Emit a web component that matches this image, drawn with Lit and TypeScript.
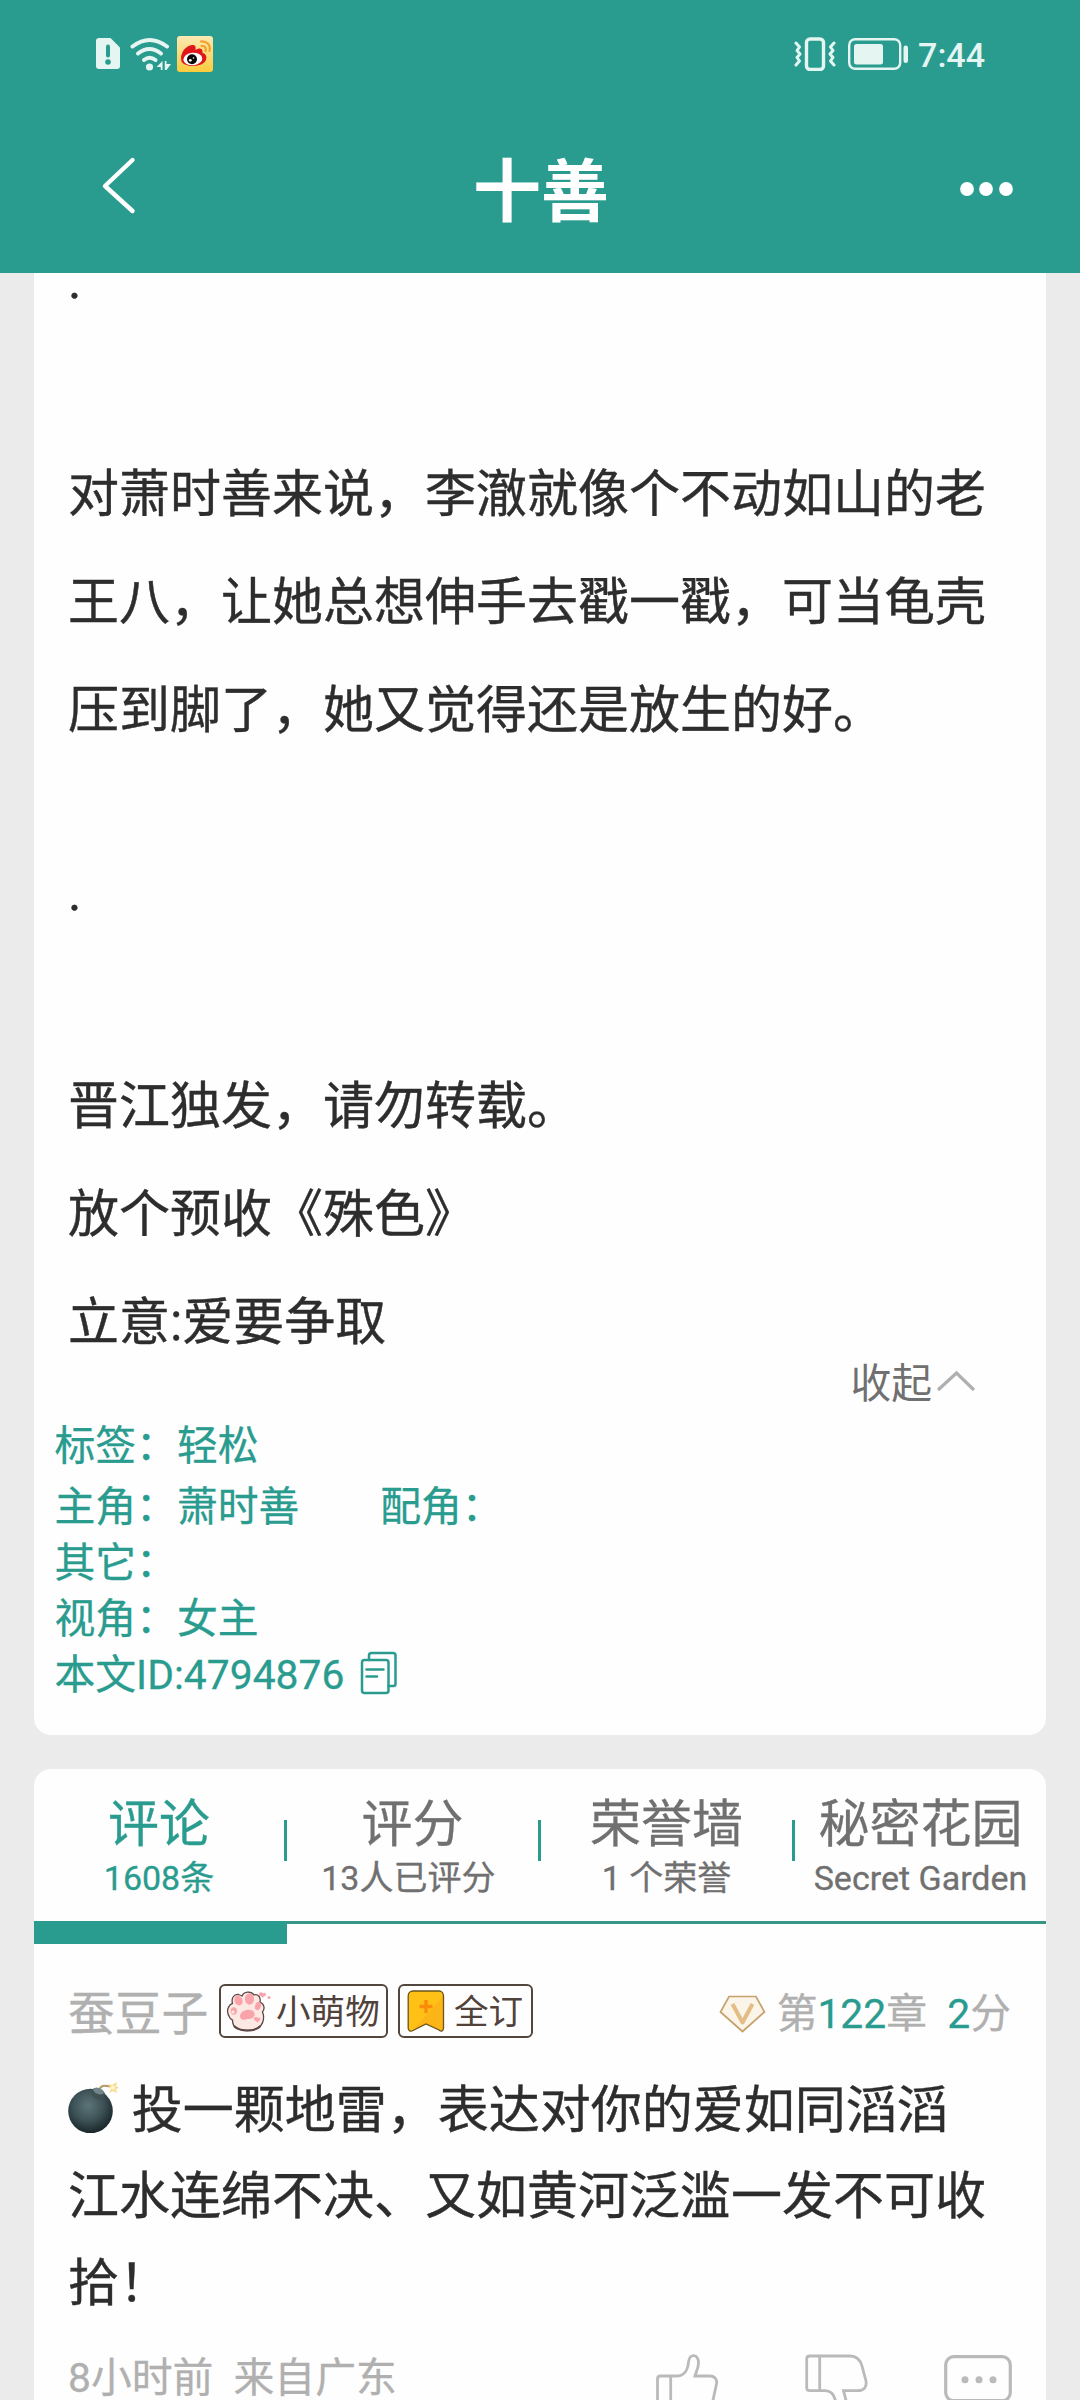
import { LitElement, html, css, svg } from "lit";
import { customElement } from "lit/decorators.js";
import { classMap } from "lit/directives/class-map.js";

@customElement("status-bar")
class StatusBar extends LitElement {
  static styles = css`
    :host { display: block; }
    .bar {
      display: flex; justify-content: space-between; align-items: center;
      height: 108px; padding: 0 95px 0 95px; box-sizing: border-box; color: #e4f5f2;
    }
    .group { display: flex; align-items: center; }
    svg { display: block; }
    .sim { margin-right: 9px; }
    .wifi { margin-right: 5px; }
    .vibrate { margin-right: 12px; }
    .battery { margin-right: 9px; }
    .time { font-size: 34px; line-height: 40px; font-weight: 500; padding-top: 2px; }
  `;
  render() {
    return html`
      <div class="bar">
        <div class="group">
          <svg class="sim" width="26" height="34" viewBox="0 0 26 34">
            <path fill="currentColor" d="M4 1H15.5L25 10.5V29a3 3 0 0 1-3 3H4a3 3 0 0 1-3-3V4a3 3 0 0 1 3-3Z"/>
            <path d="M13 9.5v9" stroke="#299c8f" stroke-width="4" stroke-linecap="round"/>
            <circle cx="13" cy="25" r="2.8" fill="#299c8f"/>
          </svg>
          <svg class="wifi" width="42" height="36" viewBox="0 0 42 36">
            <g fill="none" stroke="currentColor" stroke-width="4" stroke-linecap="round">
              <path d="M2.5 10.5Q19.500-2.500 37 10.500"/>
              <path d="M8 17.500Q19.500 8.500 31 17.500"/>
              <path d="M14 24Q19.500 19.500 25.500 24"/>
            </g>
            <circle cx="19.500" cy="31" r="3.600" fill="currentColor"/>
            <path fill="currentColor" d="M32.500 25V34H30.800V31H26.500ZM34.800 25H36.500V28H41L36.500 34H34.800Z"/>
          </svg>
          <svg width="36" height="36" viewBox="0 0 36 36">
            <defs><linearGradient id="sun" x1="0" y1="0" x2="0" y2="1"><stop offset="0" stop-color="#fbe9b4"/><stop offset="1" stop-color="#fccb3c"/></linearGradient></defs>
            <rect width="36" height="36" rx="3" fill="url(#sun)"/>
            <path fill="#e0161b" d="M4 22C4.500 15 9 10 15 9C18.500 8.600 19 11 18.500 14C21 12 25 11.500 25.500 15V17C29 17.500 30.500 21 28.500 25C25 31 8 32 4.500 25.500Z"/>
            <ellipse cx="15.800" cy="23" rx="9.500" ry="6.300" fill="#fff" transform="rotate(-5 15.800 23)"/>
            <circle cx="15" cy="23.300" r="5" fill="#080808"/>
            <circle cx="13.300" cy="24.300" r="1.400" fill="#fff"/><circle cx="16.500" cy="22" r="0.800" fill="#fff"/>
            <path d="M24 5.500C30 5 34 9 32.500 15M24.500 10C28 9.700 29.500 12 28.500 15" fill="none" stroke="#f2a22c" stroke-width="2.200" stroke-linecap="round"/>
          </svg>
        </div>
        <div class="group">
          <svg class="vibrate" width="42" height="34" viewBox="0 0 42 34">
            <rect x="12.500" y="2" width="17" height="30.500" rx="3.500" fill="none" stroke="currentColor" stroke-width="3.400"/>
            <path d="M2 6L5.500 10L3 13.500L6 17L3 20.500L5.500 24L2 28M40 6L36.500 10L39 13.500L36 17L39 20.500L36.500 24L40 28" fill="none" stroke="currentColor" stroke-width="3" stroke-linejoin="round" stroke-linecap="round"/>
          </svg>
          <svg class="battery" width="61" height="34" viewBox="0 0 61 34">
            <rect x="1.200" y="2.200" width="51" height="29.600" rx="6" fill="none" stroke="currentColor" stroke-width="2.400"/>
            <rect x="6" y="7" width="29" height="20.500" rx="2.500" fill="currentColor"/>
            <rect x="55.500" y="8.500" width="4.500" height="17.500" rx="2.200" fill="currentColor"/>
          </svg>
          <div class="time">7:44</div>
        </div>
      </div>
    `;
  }
}

@customElement("nav-bar")
class NavBar extends LitElement {
  static styles = css`
    :host { display: block; }
    .bar {
      display: grid; grid-template-columns: 200px 1fr 200px; align-items: center;
      height: 165px; padding: 0 66px 0 100px; box-sizing: border-box; color: #fff;
    }
    svg { display: block; }
    .title { font-size: 68px; line-height: 80px; font-weight: 700; text-align: center; padding: 5px 0 0; margin-right: 32px; }
    .back { margin-top: -12px; }
    .more { justify-self: end; margin-top: -2px; }
  `;
  render() {
    return html`
      <div class="bar">
        <svg class="back" width="40" height="60" viewBox="0 0 40 60">
          <path d="M32.500 5L5 31L32.500 56" fill="none" stroke="#fff" stroke-width="4.400" stroke-linecap="round" stroke-linejoin="round"/>
        </svg>
        <div class="title">十善</div>
        <svg class="more" width="56" height="16" viewBox="0 0 56 16">
          <g fill="#fff"><circle cx="9" cy="7" r="6.900"/><circle cx="28" cy="7" r="6.900"/><circle cx="48" cy="7" r="6.900"/></g>
        </svg>
      </div>
    `;
  }
}

@customElement("book-intro")
class BookIntro extends LitElement {
  static styles = css`
    :host { display: block; }
    .card { background: #fefefe; border-radius: 0 0 17px 17px; overflow: hidden; padding-bottom: 31px; }
    .story { margin-top: -46px; padding-left: 34px; width: 924px; font-size: 51px; line-height: 108px; color: #2d2d2d; -webkit-text-stroke: 0.4px currentColor; }
    p { margin: 0; }
    .lead { margin-bottom: 106px; }
    .tail { margin-bottom: 74px; }
    .fold {
      display: flex; align-items: center; justify-content: flex-end; height: 56px;
      margin-top: -21px; padding-right: 70px; color: #707070; font-size: 40.8px; line-height: 56px;
    }
    .fold svg { margin: -6px 0 0 4px; }
    .meta { padding: 5.500px 0 1px 20.500px; color: #299c8f; font-size: 40.8px; line-height: 56px; -webkit-text-stroke: 0.3px currentColor; }
    .row { display: flex; height: 56px; white-space: pre; }
    .first { margin-bottom: 5px; }
    .support { margin-left: 81px; }
    .copy { margin: 4px 0 0 16px; }
  `;
  render() {
    return html`
      <section class="card">
        <div class="story">
          <p class="lead">.</p>
          <p class="tail">对萧时善来说，李澈就像个不动如山的老王八，让她总想伸手去戳一戳，可当龟壳压到脚了，她又觉得还是放生的好。</p>
          <p class="lead">.</p>
          <p>晋江独发，请勿转载。</p>
          <p>放个预收《殊色》</p>
          <p>立意:爱要争取</p>
        </div>
        <div class="fold">
          <span>收起</span>
          <svg width="40" height="24" viewBox="0 0 40 24"><path d="M2 21L20.500 4L38 21" fill="none" stroke="#b0b0b0" stroke-width="3.200"/></svg>
        </div>
        <div class="meta">
          <div class="row first">标签：轻松</div>
          <div class="row"><span>主角：萧时善</span><span class="support">配角：</span></div>
          <div class="row">其它：</div>
          <div class="row">视角：女主</div>
          <div class="row">
            <span>本文ID:4794876</span><svg class="copy" width="38" height="44" viewBox="0 0 38 44">
              <g fill="none" stroke="#299c8f" stroke-width="2.500" stroke-linecap="round">
                <rect x="2" y="9" width="26.500" height="33" rx="2.500"/>
                <path d="M9 9V4.500a2.500 2.500 0 0 1 2.500-2.500H33a2.500 2.500 0 0 1 2.500 2.500V33a2 2 0 0 1-2 2H28.500M6.500 18.500H23.500M6.500 25.500H17"/>
              </g>
            </svg>
          </div>
        </div>
      </section>
    `;
  }
}

interface Tab { name: string; note: string; active?: boolean; }

@customElement("tab-strip")
class TabStrip extends LitElement {
  static styles = css`
    :host { display: block; }
    .tabs { display: grid; grid-template-columns: 253px 254px 254px 251px; height: 152px; }
    .tab { display: flex; color: #707070; -webkit-text-stroke: 0.3px currentColor; }
    .tab::after { content: ""; width: 3px; height: 41px; margin-top: 51px; background: #299c8f; }
    .tab:last-child::after { display: none; }
    .label { flex: 1; min-width: 0; padding-top: 24px; text-align: center; white-space: pre; }
    .name { font-size: 51px; line-height: 64px; }
    .note { font-size: 34px; line-height: 42px; }
    .active { color: #299c8f; }
    .track { height: 23px; border-top: 3px solid #369688; box-sizing: border-box; }
    .thumb { width: 253px; height: 23px; margin-top: -3px; background: #299c8f; }
  `;
  tabs: Tab[] = [
    { name: "评论", note: "1608条", active: true },
    { name: "评分", note: "13人已评分 " },
    { name: "荣誉墙", note: "1 个荣誉" },
    { name: "秘密花园", note: "Secret Garden" },
  ];
  render() {
    return html`
      <div class="tabs">
        ${this.tabs.map((t) => html`
          <div class=${classMap({ tab: true, active: !!t.active })}><div class="label"><div class="name">${t.name}</div><div class="note">${t.note}</div></div></div>`)}
      </div>
      <div class="track"><div class="thumb"></div></div>
    `;
  }
}

const paw = svg`
  <path d="M4 28C2 25 0.500 20 3 16.500C4 14.500 5.500 14 6.500 13.500C5 8 8 4 12.500 4.500C14 5 15 5.500 16 6C18 1.500 25 0.500 28 5C32 3.500 35 7.500 34 12C38.500 14 39 19 36.500 22C39 28 37 36 31 38.500C25 41.500 15 41 10 38C6.500 35.500 6.500 32 6.500 30C5.500 29.500 4.500 29 4 28Z" fill="#fde9e4" stroke="#5b4643" stroke-width="1.300"/>
  <path d="M8 36C14 42 29 42 34.500 36" fill="none" stroke="#5b4643" stroke-width="2"/>
  <g fill="#f9a3aa"><ellipse cx="12.500" cy="10.500" rx="4" ry="5" transform="rotate(-22 12.500 10.500)"/><ellipse cx="23.500" cy="9" rx="4.600" ry="5.800"/><ellipse cx="32" cy="16" rx="2.900" ry="4.200" transform="rotate(20 32 16)"/><ellipse cx="7.800" cy="21" rx="3.200" ry="3.700"/>
  <path d="M14 26C14 20 26 17 28.500 23C29.500 28 25 29 21.500 29C18 30 14 30.500 14 26Z"/>
  <path d="M31.500 32.500L28 29.500C27.500 26.500 31 26.500 31.800 28.200C33 26.500 35 28 34 30Z"/>
  <path d="M36.500 7.500L33 5C32.500 1.500 36 1.500 37 3.500C38.500 1.500 41 3.500 39.500 5.500Z"/><circle cx="43" cy="7.500" r="1.500"/></g>
  <circle cx="7" cy="22" r="1.600" fill="#fde9e4"/>
`;

@customElement("reader-comment")
class ReaderComment extends LitElement {
  static styles = css`
    :host { display: block; }
    svg { display: block; flex: none; }
    .entry { padding: 40px 34px 0; }
    .head { display: flex; height: 54px; white-space: nowrap; }
    .user { font-size: 46.800px; line-height: 61px; color: #b0b0b0; width: 151px; flex: none; -webkit-text-stroke: 0.3px currentColor; }
    .badge {
      display: flex; align-items: center; height: 54px; box-sizing: border-box; border: 2px solid #51473f;
      border-radius: 6px; color: #51423c; font-size: 34.6px; line-height: 50px;
    }
    .badge span { padding-top: 2px; }
    .cute { width: 169px; padding-left: 5px; margin-right: 10px; }
    .cute svg { margin-right: 3px; }
    .full { width: 135px; padding-left: 7px; }
    .full svg { margin-right: 9px; }
    .chapter { display: flex; margin-left: auto; font-size: 40.8px; line-height: 60px; color: #b0b0b0; white-space: pre; }
    .chapter span { margin-right: 1px; -webkit-text-stroke: 0.3px currentColor; }
    .chapter .num { margin: 0; color: #299c8f; }
    .gem { margin: 11px 11px 0 0; }
    .text { margin: 30px 0 0; width: 924px; font-size: 51px; line-height: 86.500px; color: #2d2d2d; -webkit-text-stroke: 0.4px currentColor; }
    .bomb { display: inline-block; vertical-align: -5px; -webkit-text-stroke: 0; }
    .foot { display: flex; justify-content: space-between; margin-top: 24px; }
    .origin { padding-top: 6px; height: 42px; color: #b0b0b0; font-size: 40.8px; line-height: 42px; white-space: pre; -webkit-text-stroke: 0.3px currentColor; }
    .actions { display: flex; padding-top: 1px; }
    .up { margin-right: 86px; }
    .down { margin-right: 76px; }
  `;
  render() {
    return html`
      <div class="entry">
        <div class="head">
          <div class="user">蚕豆子</div>
          <div class="badge cute"><svg width="47" height="42" viewBox="0 0 47 42">${paw}</svg><span>小萌物</span></div>
          <div class="badge full">
            <svg width="38" height="42" viewBox="0 0 38 42">
              <defs><linearGradient id="gold" x1="0" y1="0" x2="1" y2="1"><stop offset=".55" stop-color="#ffc116"/><stop offset=".56" stop-color="#fcb417"/></linearGradient></defs>
              <path d="M6 1H32C35 1 36.500 3.500 36.500 6V38C36.500 41 34.500 42 32 40L19 34L6 40.500C3.500 42 1.200 41 1.200 38V6C1.200 3 3 1 6 1Z" fill="url(#gold)" stroke="#6a541d" stroke-width="1.300"/>
              <path d="M19 10V23M12.500 16.500H25.500" stroke="#fa8c0c" stroke-width="3.400"/>
            </svg><span>全订</span>
          </div>
          <div class="chapter"><svg class="gem" width="47" height="38" viewBox="0 0 47 38">
            <path d="M10 1.500H37L45.500 17L23.500 36.500L1.500 17Z" fill="#fbf4e9" stroke="#c6a16c" stroke-width="1.700"/>
            <path d="M13.500 9L23.500 27.500L33.500 9" fill="none" stroke="#e3bd85" stroke-width="4" stroke-linejoin="round"/>
          </svg><span>第<span class="num">122</span>章  <span class="num">2</span>分</span></div>
        </div>
        <p class="text"><svg class="bomb" width="51" height="51" viewBox="0 0 51 51">
          <defs><radialGradient id="iron" cx=".45" cy=".38" r=".62"><stop offset="0" stop-color="#5c7478"/><stop offset=".55" stop-color="#3d5256"/><stop offset="1" stop-color="#19262a"/></radialGradient></defs>
          <path d="M31 8C34 1 39 5 43 4" fill="none" stroke="#b49a62" stroke-width="2"/>
          <path d="M40 2L44 3L49 0L48 4L51 6L48 7L49 11L45 9L41 11L43 7Z" fill="#f8dc8d"/><circle cx="45" cy="5.500" r="2" fill="#fff8d8"/>
          <circle cx="22.500" cy="29" r="22.300" fill="url(#iron)"/>
          <path d="M24 8C25 5 35 6 37 12L35 18C31 19 24 15 23 12Z" fill="#3f5155"/><ellipse cx="30.500" cy="9" rx="5.500" ry="3" transform="rotate(20 30.500 9)" fill="#71858a"/>
        </svg> 投一颗地雷，表达对你的爱如同滔滔江水连绵不决、又如黄河泛滥一发不可收拾！</p>
        <div class="foot">
          <span class="origin">8小时前  来自广东</span>
          <div class="actions">
            <svg class="up" width="63" height="66" viewBox="6 2 63 66"><path d="M20.700 26V64M7.500 64V29q0-3 3-3H26C34 26 38 20 38.500 12C39.500 3 48.500 3.500 48.500 13C48.500 18 46 22 45 26H60C65 26 67.500 30 66.500 34L60 64" fill="none" stroke="#bababa" stroke-width="2.800"/></svg>
            <svg class="down" width="63" height="66" viewBox="5 2 63 66"><path d="M19.700 6V40.700M47 54L43.500 40.700H58C64 40.700 67 37 66 31L62 16C60 9 56 6 50 6H9.700q-3 0-3 3V37.700q0 3 3 3H25C31 40.700 35 45 36 54" fill="none" stroke="#bababa" stroke-width="2.800"/></svg>
            <svg width="68" height="66" viewBox="0 0 68 66"><rect x="1.700" y="4.700" width="64.600" height="44" rx="8" fill="none" stroke="#bababa" stroke-width="3.200"/><g fill="#bababa"><circle cx="21" cy="27.700" r="3.500"/><circle cx="35" cy="27.700" r="3.500"/><circle cx="49" cy="27.700" r="3.500"/></g></svg>
          </div>
        </div>
      </div>
    `;
  }
}

@customElement("app-root")
class AppRoot extends LitElement {
  static styles = css`
    :host {
      display: block; width: 1080px; height: 2400px; overflow: hidden; background: #ebebeb;
      font-family: Roboto, "Noto Sans CJK SC", sans-serif;
    }
    .top { height: 273px; background: #299c8f; }
    .page { display: flex; flex-direction: column; gap: 34px; padding: 0 34px; }
    .reviews { height: 760px; background: #fefefe; border-radius: 17px 17px 0 0; }
  `;
  render() {
    return html`
      <header class="top"><status-bar></status-bar><nav-bar></nav-bar></header>
      <main class="page">
        <book-intro></book-intro>
        <section class="reviews"><tab-strip></tab-strip><reader-comment></reader-comment></section>
      </main>
    `;
  }
}
